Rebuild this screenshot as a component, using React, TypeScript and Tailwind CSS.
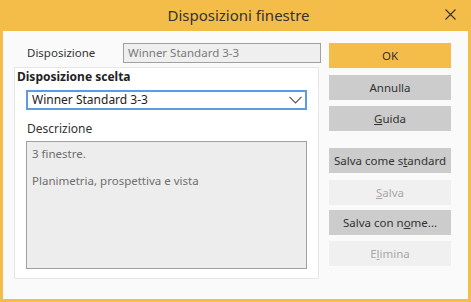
import { ReactNode } from 'react'

const font = { fontFamily: '"Noto Sans", "Liberation Sans", sans-serif' }

function Btn({ children, kind = 'normal' }: { children: ReactNode; kind?: 'primary' | 'normal' | 'disabled' }) {
  const cls =
    kind === 'primary'
      ? 'bg-[#f4bd4a] text-[#333]'
      : kind === 'disabled'
        ? 'bg-[#f0f0f0] text-[#a8a8a8]'
        : 'bg-[#cccccc] text-[#333]'
  return (
    <div className={`h-[25px] w-[122px] flex items-center justify-center text-[11.5px] ${cls}`}>{children}</div>
  )
}

export default function App() {
  return (
    <div className="w-[471px] h-[302px] bg-[#f4bd4a] flex flex-col text-[#333]" style={font}>
      <div className="h-[31px] flex items-center relative shrink-0">
        <div className="flex-1 text-center text-[15px] text-[#333] pl-[6px]">Disposizioni finestre</div>
        <svg className="absolute left-[445px] top-[9px]" width="11" height="11" viewBox="0 0 11 11">
          <path d="M0.5 0.5L10.5 10.5M10.5 0.5L0.5 10.5" stroke="#333" strokeWidth="1.1" />
        </svg>
      </div>
      <div className="flex-1 mx-[3px] mb-[3px] bg-[#fafafa] flex pt-[12px] pl-[11px]">
        <div className="w-[307px] flex flex-col">
          <div className="flex items-center h-[20px]">
            <div className="w-[109px] pl-[13px] text-[11.5px]">Disposizione</div>
            <div className="w-[198px] h-[20px] border border-[#a0a0a0] bg-[#efefef] text-[11.5px] text-[#7a7a7a] flex items-center pl-[4px]">
              Winner Standard 3-3
            </div>
          </div>
          <div className="mt-[4px] w-[305px] h-[212px] bg-white border border-[#e6e6e6] flex flex-col">
            <div className="pl-[2px] pt-[1px] text-[12px] font-bold text-[#222] leading-[16px]">Disposizione scelta</div>
            <div className="ml-[11px] mt-[5px] w-[281px] h-[20px] border-2 border-[#5c9ce3] flex items-center justify-between pl-[4px] pr-[3px] text-[12px] text-[#222]">
              <span>Winner Standard 3-3</span>
              <svg width="13" height="8" viewBox="0 0 13 8">
                <path d="M0.5 0.8L6.5 6.8L12.5 0.8" stroke="#555" strokeWidth="1.2" fill="none" />
              </svg>
            </div>
            <div className="ml-[12px] mt-[11px] text-[12px] leading-[16px]">Descrizione</div>
            <div className="ml-[11px] mt-[4px] w-[281px] h-[128px] border border-[#a0a0a0] bg-[#ededed] px-[5px] pt-[4px] text-[11.5px] text-[#6e6e6e] leading-[16px]">
              <div>3 finestre.</div>
              <div className="mt-[11px]">Planimetria, prospettiva e vista</div>
            </div>
          </div>
        </div>
        <div className="ml-[8px] flex flex-col">
          <Btn kind="primary">OK</Btn>
          <div className="mt-[7px]"><Btn>Annulla</Btn></div>
          <div className="mt-[6px]"><Btn><span><u>G</u>uida</span></Btn></div>
          <div className="mt-[17px]"><Btn><span>Salva come s<u>t</u>andard</span></Btn></div>
          <div className="mt-[7px]"><Btn kind="disabled"><span><u>S</u>alva</span></Btn></div>
          <div className="mt-[5px]"><Btn><span>Salva con n<u>o</u>me...</span></Btn></div>
          <div className="mt-[6px]"><Btn kind="disabled"><span>E<u>l</u>imina</span></Btn></div>
        </div>
      </div>
    </div>
  )
}
